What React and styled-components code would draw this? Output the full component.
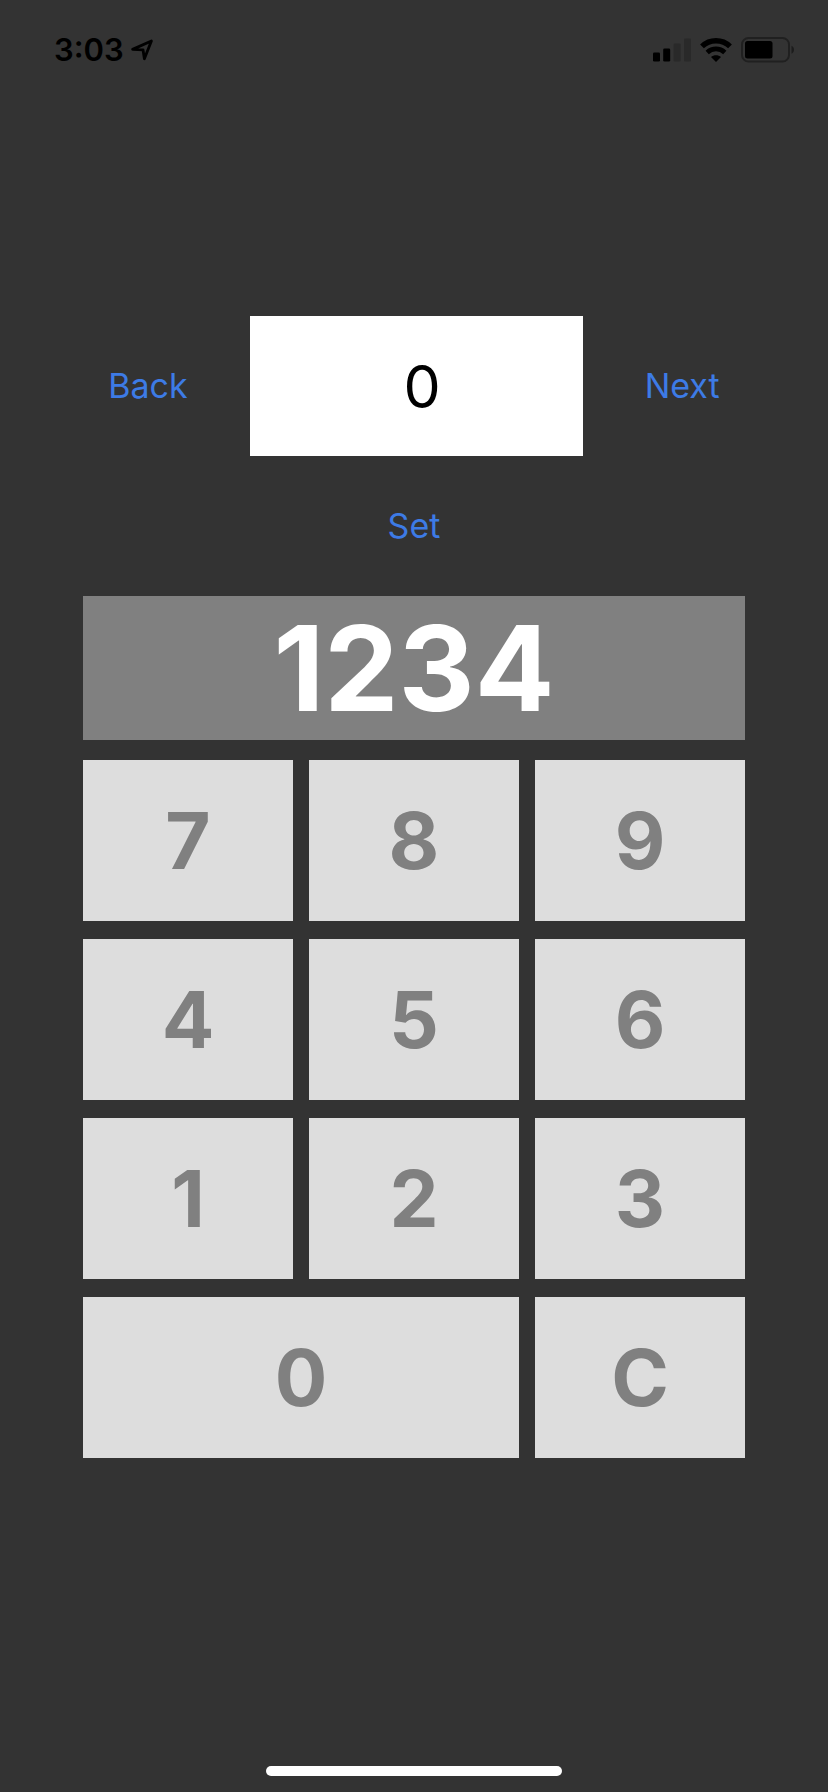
import React, { useState } from "react";
import styled, { createGlobalStyle } from "styled-components";

const GlobalStyle = createGlobalStyle`
  * {
    box-sizing: border-box;
  }
  body {
    margin: 0;
    background-color: #333333;
    font-family: Inter, "Liberation Sans", sans-serif;
  }
  button, input {
    font-family: inherit;
    border: none;
    border-radius: 0;
    margin: 0;
    padding: 0;
  }
`;

const Screen = styled.div`
  display: flex;
  flex-direction: column;
  min-height: 100vh;
  background-color: #333333;
`;

const StatusBar = styled.header`
  display: flex;
  align-items: center;
  justify-content: space-between;
  height: 100px;
  padding: 0 33px 0 54px;
  color: #000000;
`;

const StatusGroup = styled.div`
  display: flex;
  align-items: center;
  gap: ${(props) => props.$gap}px;
`;

const Time = styled.span`
  font-size: 31px;
  line-height: 40px;
  font-weight: 600;
`;

const Main = styled.main`
  display: flex;
  flex-direction: column;
  gap: 50px;
  padding: 216px 83px 50px;
`;

const FieldRow = styled.div`
  display: flex;
  align-items: center;
  justify-content: center;
  gap: 62px;
`;

const Field = styled.input`
  flex: 0 1 333px;
  min-width: 0;
  height: 140px;
  padding-left: 12px;
  background-color: #ffffff;
  color: #000000;
  font-size: 59px;
  text-align: center;
`;

const TextButton = styled.button`
  align-self: center;
  height: 40px;
  background: none;
  color: #3d7be6;
  font-size: 34px;
  line-height: 40px;
  cursor: pointer;
`;

const Pad = styled.section`
  display: flex;
  flex-direction: column;
  gap: 20px;
`;

const Display = styled.output`
  display: flex;
  align-items: center;
  justify-content: center;
  height: 144px;
  background-color: #808080;
  color: #ffffff;
  font-size: 118px;
  line-height: 144px;
  font-weight: 700;
  overflow: hidden;
`;

const Keys = styled.div`
  display: grid;
  grid-template-columns: repeat(3, 1fr);
  gap: 18px 16px;
`;

const Key = styled.button`
  grid-column: span ${(props) => (props.$wide ? 2 : 1)};
  height: 161px;
  background-color: #dddddd;
  color: #808080;
  font-size: 78px;
  font-weight: 700;
  cursor: pointer;
`;

const HomeIndicator = styled.div`
  align-self: center;
  width: 296px;
  height: 10px;
  margin: auto 0 16px;
  border-radius: 5px;
  background-color: #ffffff;
`;

const LocationIcon = () => (
  <svg width="22" height="22" viewBox="0 0 22 22" fill="none" aria-hidden="true">
    <path
      d="M1.6 10.4 L20.4 2 L13.4 19.8 L12 10.8 Z"
      stroke="#000000"
      strokeWidth="2.8"
      strokeLinejoin="round"
    />
  </svg>
);

const SignalIcon = () => (
  <svg width="38" height="24" viewBox="0 0 38 24" aria-hidden="true">
    <rect x="0" y="14.5" width="7" height="9" rx="1.3" fill="#000000" />
    <rect x="10.2" y="10.5" width="7" height="13" rx="1.3" fill="#000000" />
    <rect x="20.6" y="5.5" width="7" height="18" rx="1.3" fill="#292929" />
    <rect x="31" y="0.5" width="7" height="23" rx="1.3" fill="#292929" />
  </svg>
);

const WifiIcon = () => (
  <svg width="32" height="24" viewBox="0 0 32 24" fill="none" aria-hidden="true">
    <path d="M2 8.4 C9.8 0.8 22.2 0.8 30 8.4" stroke="#000000" strokeWidth="5.4" />
    <path d="M7.2 14.4 C12.2 9.8 19.8 9.8 24.8 14.4" stroke="#000000" strokeWidth="4.8" />
    <path d="M16 24 L11 19 C13.6 16.6 18.4 16.6 21 19 Z" fill="#000000" />
  </svg>
);

const BatteryIcon = () => (
  <svg width="54" height="26" viewBox="0 0 54 26" aria-hidden="true">
    <rect
      x="1"
      y="1"
      width="47"
      height="23.5"
      rx="6.5"
      fill="none"
      stroke="#202020"
      strokeWidth="2"
    />
    <rect x="4" y="4" width="27.5" height="17.5" rx="2.5" fill="#000000" />
    <path d="M50.5 8.8 C53.8 10 53.8 15.5 50.5 16.7 Z" fill="#1c1c1c" />
  </svg>
);

const digits = ["7", "8", "9", "4", "5", "6", "1", "2", "3"];

const App = () => {
  const [count, setCount] = useState("0");
  const [code, setCode] = useState("1234");

  const press = (digit) => {
    setCode((prev) => (prev.length < 4 ? prev + digit : digit));
  };

  const step = (by) => {
    setCount((prev) => String(Math.max(0, (Number(prev) || 0) + by)));
  };

  return (
    <Screen>
      <GlobalStyle />
      <StatusBar>
        <StatusGroup $gap={7}>
          <Time>3:03</Time>
          <LocationIcon />
        </StatusGroup>
        <StatusGroup $gap={9}>
          <SignalIcon />
          <WifiIcon />
          <BatteryIcon />
        </StatusGroup>
      </StatusBar>
      <Main>
        <FieldRow>
          <TextButton onClick={() => step(-1)}>Back</TextButton>
          <Field
            aria-label="Value"
            inputMode="numeric"
            value={count}
            onChange={(e) => setCount(e.target.value)}
          />
          <TextButton onClick={() => step(1)}>Next</TextButton>
        </FieldRow>
        <TextButton onClick={() => setCount(code)}>Set</TextButton>
        <Pad>
          <Display>{code}</Display>
          <Keys>
            {digits.map((digit) => (
              <Key key={digit} onClick={() => press(digit)}>
                {digit}
              </Key>
            ))}
            <Key $wide onClick={() => press("0")}>
              0
            </Key>
            <Key onClick={() => setCode("")}>C</Key>
          </Keys>
        </Pad>
      </Main>
      <HomeIndicator />
    </Screen>
  );
};

export default App;
